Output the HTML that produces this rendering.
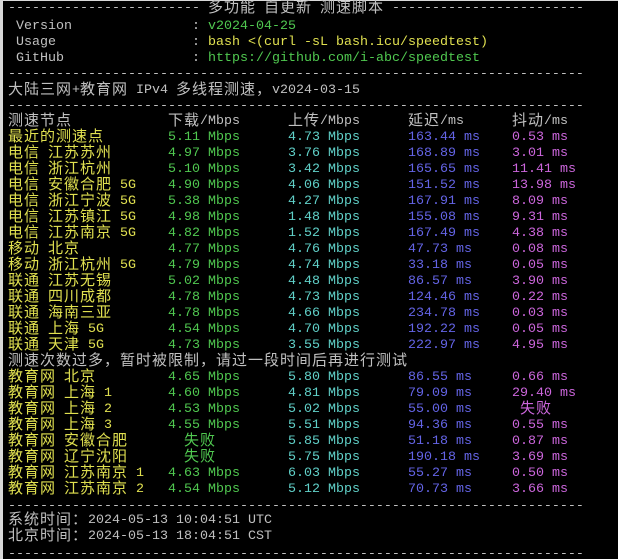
<!DOCTYPE html>
<html><head><meta charset="utf-8"><style>
html,body{margin:0;padding:0;background:#000;width:618px;height:559px;overflow:hidden}
body{position:relative;font-family:"Liberation Mono","Noto Sans CJK SC",monospace;font-size:13.33px;color:#c0c0c0}
.r{position:absolute;left:0;height:16px;line-height:16px;white-space:pre;width:618px}
.r>span{position:absolute;top:0;height:16px;line-height:16px}
b{font-weight:normal;font-family:"Noto Sans CJK SC",sans-serif;font-size:15px;letter-spacing:1px;line-height:0;vertical-align:baseline;position:relative;top:1px}
.y{color:#e0e050}.g{color:#50c850}.c{color:#60d0c8}.b{color:#6464e6}.m{color:#cc66dc}
.strip{position:absolute;left:0;top:0;width:3px;height:559px;background:#d8d8d8}
.top{position:absolute;left:0;top:0;width:618px;height:1px;background:#d8d8d8}
</style></head><body>
<div class="strip"></div><div class="top"></div>
<div class="r" style="top:1px"><span style="left:8px">------------------------ <b>多功能</b> <b>自更新</b> <b>测速脚本</b> ------------------------</span></div>
<div class="r" style="top:19px"><span style="left:16px">Version</span><span style="left:192px">: <span class="g">v2024-04-25</span></span></div>
<div class="r" style="top:35px"><span style="left:16px">Usage</span><span style="left:192px">: <span class="y">bash &lt;(curl -sL bash.icu/speedtest)</span></span></div>
<div class="r" style="top:51px"><span style="left:16px">GitHub</span><span style="left:192px">: <span class="g">https://github.com/i-abc/speedtest</span></span></div>
<div class="r" style="top:67px"><span style="left:8px">------------------------------------------------------------------------</span></div>
<div class="r" style="top:83px"><span style="left:8px"><b>大陆三网</b>+<b>教育网</b> IPv4 <b>多线程测速，</b>v2024-03-15</span></div>
<div class="r" style="top:99px"><span style="left:8px">------------------------------------------------------------------------</span></div>
<div class="r" style="top:114px"><span style="left:8px"><b>测速节点</b></span><span style="left:168px"><b>下载</b>/Mbps</span><span style="left:288px"><b>上传</b>/Mbps</span><span style="left:408px"><b>延迟</b>/ms</span><span style="left:512px"><b>抖动</b>/ms</span></div>

<div class="r" style="top:130px"><span class="y" style="left:8px"><b>最近的测速点</b></span><span class="g" style="left:168px">5.11 Mbps</span><span class="c" style="left:288px">4.73 Mbps</span><span class="b" style="left:408px">163.44 ms</span><span class="m" style="left:512px">0.53 ms</span></div>
<div class="r" style="top:146px"><span class="y" style="left:8px"><b>电信</b> <b>江苏苏州</b></span><span class="g" style="left:168px">4.97 Mbps</span><span class="c" style="left:288px">3.76 Mbps</span><span class="b" style="left:408px">168.89 ms</span><span class="m" style="left:512px">3.01 ms</span></div>
<div class="r" style="top:162px"><span class="y" style="left:8px"><b>电信</b> <b>浙江杭州</b></span><span class="g" style="left:168px">5.10 Mbps</span><span class="c" style="left:288px">3.42 Mbps</span><span class="b" style="left:408px">165.65 ms</span><span class="m" style="left:512px">11.41 ms</span></div>
<div class="r" style="top:178px"><span class="y" style="left:8px"><b>电信</b> <b>安徽合肥</b> 5G</span><span class="g" style="left:168px">4.90 Mbps</span><span class="c" style="left:288px">4.06 Mbps</span><span class="b" style="left:408px">151.52 ms</span><span class="m" style="left:512px">13.98 ms</span></div>
<div class="r" style="top:194px"><span class="y" style="left:8px"><b>电信</b> <b>浙江宁波</b> 5G</span><span class="g" style="left:168px">5.38 Mbps</span><span class="c" style="left:288px">4.27 Mbps</span><span class="b" style="left:408px">167.91 ms</span><span class="m" style="left:512px">8.09 ms</span></div>
<div class="r" style="top:210px"><span class="y" style="left:8px"><b>电信</b> <b>江苏镇江</b> 5G</span><span class="g" style="left:168px">4.98 Mbps</span><span class="c" style="left:288px">1.48 Mbps</span><span class="b" style="left:408px">155.08 ms</span><span class="m" style="left:512px">9.31 ms</span></div>
<div class="r" style="top:226px"><span class="y" style="left:8px"><b>电信</b> <b>江苏南京</b> 5G</span><span class="g" style="left:168px">4.82 Mbps</span><span class="c" style="left:288px">1.52 Mbps</span><span class="b" style="left:408px">167.49 ms</span><span class="m" style="left:512px">4.38 ms</span></div>
<div class="r" style="top:242px"><span class="y" style="left:8px"><b>移动</b> <b>北京</b></span><span class="g" style="left:168px">4.77 Mbps</span><span class="c" style="left:288px">4.76 Mbps</span><span class="b" style="left:408px">47.73 ms</span><span class="m" style="left:512px">0.08 ms</span></div>
<div class="r" style="top:258px"><span class="y" style="left:8px"><b>移动</b> <b>浙江杭州</b> 5G</span><span class="g" style="left:168px">4.79 Mbps</span><span class="c" style="left:288px">4.74 Mbps</span><span class="b" style="left:408px">33.18 ms</span><span class="m" style="left:512px">0.05 ms</span></div>
<div class="r" style="top:274px"><span class="y" style="left:8px"><b>联通</b> <b>江苏无锡</b></span><span class="g" style="left:168px">5.02 Mbps</span><span class="c" style="left:288px">4.48 Mbps</span><span class="b" style="left:408px">86.57 ms</span><span class="m" style="left:512px">3.90 ms</span></div>
<div class="r" style="top:290px"><span class="y" style="left:8px"><b>联通</b> <b>四川成都</b></span><span class="g" style="left:168px">4.78 Mbps</span><span class="c" style="left:288px">4.73 Mbps</span><span class="b" style="left:408px">124.46 ms</span><span class="m" style="left:512px">0.22 ms</span></div>
<div class="r" style="top:306px"><span class="y" style="left:8px"><b>联通</b> <b>海南三亚</b></span><span class="g" style="left:168px">4.78 Mbps</span><span class="c" style="left:288px">4.66 Mbps</span><span class="b" style="left:408px">234.78 ms</span><span class="m" style="left:512px">0.03 ms</span></div>
<div class="r" style="top:322px"><span class="y" style="left:8px"><b>联通</b> <b>上海</b> 5G</span><span class="g" style="left:168px">4.54 Mbps</span><span class="c" style="left:288px">4.70 Mbps</span><span class="b" style="left:408px">192.22 ms</span><span class="m" style="left:512px">0.05 ms</span></div>
<div class="r" style="top:338px"><span class="y" style="left:8px"><b>联通</b> <b>天津</b> 5G</span><span class="g" style="left:168px">4.73 Mbps</span><span class="c" style="left:288px">3.55 Mbps</span><span class="b" style="left:408px">222.97 ms</span><span class="m" style="left:512px">4.95 ms</span></div>
<div class="r" style="top:354px"><span style="left:8px"><b>测速次数过多，暂时被限制，请过一段时间后再进行测试</b></span></div>
<div class="r" style="top:370px"><span class="y" style="left:8px"><b>教育网</b> <b>北京</b></span><span class="g" style="left:168px">4.65 Mbps</span><span class="c" style="left:288px">5.80 Mbps</span><span class="b" style="left:408px">86.55 ms</span><span class="m" style="left:512px">0.66 ms</span></div>
<div class="r" style="top:386px"><span class="y" style="left:8px"><b>教育网</b> <b>上海</b> 1</span><span class="g" style="left:168px">4.60 Mbps</span><span class="c" style="left:288px">4.81 Mbps</span><span class="b" style="left:408px">79.09 ms</span><span class="m" style="left:512px">29.40 ms</span></div>
<div class="r" style="top:402px"><span class="y" style="left:8px"><b>教育网</b> <b>上海</b> 2</span><span class="g" style="left:168px">4.53 Mbps</span><span class="c" style="left:288px">5.02 Mbps</span><span class="b" style="left:408px">55.00 ms</span><span class="m" style="left:520px"><b>失败</b></span></div>
<div class="r" style="top:418px"><span class="y" style="left:8px"><b>教育网</b> <b>上海</b> 3</span><span class="g" style="left:168px">4.55 Mbps</span><span class="c" style="left:288px">5.51 Mbps</span><span class="b" style="left:408px">94.36 ms</span><span class="m" style="left:512px">0.55 ms</span></div>
<div class="r" style="top:434px"><span class="y" style="left:8px"><b>教育网</b> <b>安徽合肥</b></span><span class="g" style="left:184px"><b>失败</b></span><span class="c" style="left:288px">5.85 Mbps</span><span class="b" style="left:408px">51.18 ms</span><span class="m" style="left:512px">0.87 ms</span></div>
<div class="r" style="top:450px"><span class="y" style="left:8px"><b>教育网</b> <b>辽宁沈阳</b></span><span class="g" style="left:184px"><b>失败</b></span><span class="c" style="left:288px">5.75 Mbps</span><span class="b" style="left:408px">190.18 ms</span><span class="m" style="left:512px">3.69 ms</span></div>
<div class="r" style="top:466px"><span class="y" style="left:8px"><b>教育网</b> <b>江苏南京</b> 1</span><span class="g" style="left:168px">4.63 Mbps</span><span class="c" style="left:288px">6.03 Mbps</span><span class="b" style="left:408px">55.27 ms</span><span class="m" style="left:512px">0.50 ms</span></div>
<div class="r" style="top:482px"><span class="y" style="left:8px"><b>教育网</b> <b>江苏南京</b> 2</span><span class="g" style="left:168px">4.54 Mbps</span><span class="c" style="left:288px">5.12 Mbps</span><span class="b" style="left:408px">70.73 ms</span><span class="m" style="left:512px">3.66 ms</span></div>
<div class="r" style="top:499px"><span style="left:8px">------------------------------------------------------------------------</span></div>
<div class="r" style="top:513px"><span style="left:8px"><b>系统时间：</b>2024-05-13 10:04:51 UTC</span></div>
<div class="r" style="top:529px"><span style="left:8px"><b>北京时间：</b>2024-05-13 18:04:51 CST</span></div>
<div class="r" style="top:547px"><span style="left:8px">------------------------------------------------------------------------</span></div>
</body></html>
